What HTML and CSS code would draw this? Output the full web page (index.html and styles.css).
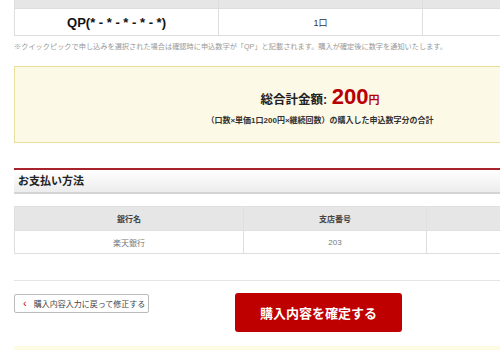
FILE: index.html
```html
<!DOCTYPE html>
<html lang="ja">
<head>
<meta charset="utf-8">
<link rel="stylesheet" href="styles.css">
</head>
<body>
<div class="page">
  <table class="tbl top">
    <tr class="head"><th></th><th></th><th></th></tr>
    <tr class="row"><td class="qp">QP(* - * - * - * - *)</td><td class="cnt">1口</td><td></td></tr>
  </table>
  <p class="note">※クイックピックで申し込みを選択された場合は確認時に申込数字が「QP」と記載されます。購入が確定後に数字を通知いたします。</p>

  <div class="total">
    <div class="total-line"><span class="lbl">総合計金額:</span> <span class="amt">200</span><span class="yen">円</span></div>
    <div class="total-sub">（口数×単価1口200円×継続回数）の購入した申込数字分の合計</div>
  </div>

  <h2 class="sec">お支払い方法</h2>

  <table class="tbl bank">
    <tr class="bhead"><th class="c1">銀行名</th><th class="c2">支店番号</th><th class="c3"></th></tr>
    <tr class="brow"><td>楽天銀行</td><td>203</td><td></td></tr>
  </table>

  <div class="actions">
    <a class="back"><span class="chev">‹</span>購入内容入力に戻って修正する</a>
    <a class="confirm">購入内容を確定する</a>
  </div>
  <div class="strip"></div>
</div>
</body>
</html>
```
FILE: styles.css
```css
html, body { margin: 0; padding: 0; overflow: hidden; background: #fff; }
body { font-family: "Liberation Sans", "Noto Sans CJK JP", sans-serif; color: #333; }
.page { margin-left: 14px; width: 612px; }
.tbl { border-collapse: collapse; width: 612px; table-layout: fixed; }
.tbl th, .tbl td { border: 1px solid #dedede; padding: 0; text-align: center; }
.top .head th { height: 8px; background: #e6e6e6; border-top: 0; }
.top .row td { height: 26px; }
.top th:nth-child(1) { width: 203px; }
.top th:nth-child(2) { width: 203px; }
.qp { font-size: 13px; font-weight: bold; color: #111; }
.cnt { font-size: 9px; color: #333; }
.note { margin: 6px 0 0; font-size: 7.2px; line-height: 10px; color: #999; white-space: nowrap; }

.total { margin-top: 14px; height: 75px; background: #fdf9e7; border: 1px solid #e9df9c; display: flex; flex-direction: column; align-items: center; }
.total-line { margin-top: 17px; line-height: 26px; height: 26px; white-space: nowrap; }
.lbl { font-size: 12.5px; font-weight: bold; color: #222; }
.amt { font-size: 22px; font-weight: bold; color: #b80000; font-family: "Liberation Sans Narrow", "Liberation Sans", sans-serif; }
.yen { font-size: 11px; font-weight: bold; color: #b80000; }
.total-sub { margin-top: 4px; font-size: 8px; font-weight: bold; color: #333; white-space: nowrap; }

.sec { margin: 25px 0 0; height: 22px; line-height: 22px; padding-left: 4px; font-size: 11px; font-weight: bold; color: #222;
  border-top: 2px solid #a8232c; border-bottom: 2px solid #d4d4d4; background: linear-gradient(#fff, #ececec); }

.bank { margin-top: 12px; }
.bank .c1 { width: 228px; }
.bank .c2 { width: 182px; }
.bhead th { height: 23px; background: #e6e6e6; font-size: 8px; font-weight: bold; color: #444; border-color: #e0e0e0; }
.brow td { height: 22px; font-size: 8px; color: #777; }

.actions { margin-top: 26px; border-top: 1px solid #e4e4e4; padding-top: 12px; display: flex; align-items: flex-start; gap: 86px; height: 40px; }
.back { margin-top: 1px; box-sizing: border-box; width: 135px; height: 19px; border: 1px solid #bbb; border-radius: 2px; font-size: 8px; color: #444; display: flex; align-items: center; padding-left: 8px; white-space: nowrap; }
.chev { color: #c00; font-size: 11px; margin-right: 7px; line-height: 1; }
.confirm { width: 167px; height: 39px; background: #bf0000; border-radius: 3px; color: #fff; font-size: 13px; font-weight: bold; display: flex; align-items: center; justify-content: center; }
.strip { margin-top: 13px; height: 10px; background: #fdfbe4; }
```
